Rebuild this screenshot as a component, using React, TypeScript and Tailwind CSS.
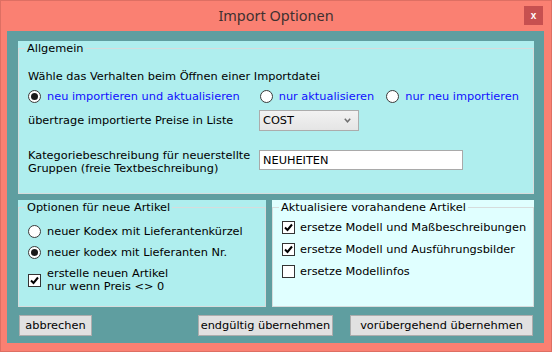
import React from "react";

function Radio({ checked }: { checked?: boolean }) {
  return (
    <span className="flex h-[13px] w-[13px] shrink-0 items-center justify-center rounded-full border border-[#3a3a3a] bg-white">
      {checked && <span className="h-[7px] w-[7px] rounded-full bg-[#1a1a1a]" />}
    </span>
  );
}

function Check({ checked }: { checked?: boolean }) {
  return (
    <span className="flex h-[13px] w-[13px] shrink-0 items-center justify-center border border-[#333333] bg-white">
      {checked && (
        <svg width="9" height="9" viewBox="0 0 9 9">
          <path d="M1 4.5 L3.5 7 L8 1.5" fill="none" stroke="#000" strokeWidth="2" />
        </svg>
      )}
    </span>
  );
}

function Group({ title, className, children }: { title: string; className: string; children: React.ReactNode }) {
  return (
    <div className={className}>
      <fieldset className="h-full border border-[#d6dcdc] px-0 pb-0 pt-0">
        <legend className="ml-[6px] px-[2px] leading-[14px]">{title}</legend>
        {children}
      </fieldset>
    </div>
  );
}

function Button({ label, className }: { label: string; className: string }) {
  return (
    <button className={"h-[21px] border border-[#adadad] bg-[#e1e1e1] leading-[19px] text-black " + className}>
      {label}
    </button>
  );
}

export default function App() {
  return (
    <div className="flex h-[352px] w-[552px] flex-col border border-[#de6f63] bg-[#fa8072] font-['DejaVu_Sans',sans-serif] text-[11.33px] text-black">
      <div className="grid h-[30px] grid-cols-[1fr_auto_1fr] items-center">
        <div />
        <div className="font-['Noto_Sans',sans-serif] text-[14.5px] text-[#3e3130]">Import Optionen</div>
        <div className="flex justify-end pr-[8px]">
          <div className="mt-[-1px] flex h-[19px] w-[19px] items-center justify-center bg-[#c75050] font-['Liberation_Sans',sans-serif] text-[10px] font-bold leading-none text-white">
            x
          </div>
        </div>
      </div>
      <div className="ml-[6px] mr-[7px] flex h-[312px] flex-col bg-[#5f9ea0] pl-[11px] pr-[10px] pt-[10px]">
        <Group title="Allgemein" className="h-[153px] bg-[#afeeee]">
          <div className="pl-[9px]">
            <div className="mt-[14px] leading-[14px]">Wähle das Verhalten beim Öffnen einer Importdatei</div>
            <div className="mt-[6px] flex h-[14px] items-center text-[#1010ff]">
              <Radio checked />
              <span className="ml-[6px]">neu importieren und aktualisieren</span>
              <span className="ml-[20px]">
                <Radio />
              </span>
              <span className="ml-[6px]">nur aktualisieren</span>
              <span className="ml-[12px]">
                <Radio />
              </span>
              <span className="ml-[6px]">nur neu importieren</span>
            </div>
            <div className="mt-[7px] flex h-[21px] items-center">
              <span className="w-[231px]">übertrage importierte Preise in Liste</span>
              <div className="flex h-[21px] w-[100px] items-center justify-between border border-[#acacac] bg-gradient-to-b from-[#f2f2f2] to-[#e5e5e5] pl-[3px] pr-[7px]">
                <span>COST</span>
                <svg width="7" height="5" viewBox="0 0 7 5">
                  <path d="M0.8 0.8 L3.5 3.8 L6.2 0.8" fill="none" stroke="#707070" strokeWidth="1.5" />
                </svg>
              </div>
            </div>
            <div className="mt-[18px] flex items-start">
              <div className="w-[231px] leading-[13px]">
                Kategoriebeschreibung für neuerstellte
                <br />
                Gruppen (freie Textbeschreibung)
              </div>
              <div className="mt-[1px] flex h-[20px] w-[204px] items-center border border-[#a9a9a9] bg-white pl-[3px]">
                NEUHEITEN
              </div>
            </div>
          </div>
        </Group>
        <div className="mt-[6px] flex h-[107px] gap-[6px]">
          <Group title="Optionen für neue Artikel" className="w-[248px] bg-[#afeeee]">
            <div className="pl-[9px]">
              <div className="mt-[10px] flex h-[14px] items-center">
                <Radio />
                <span className="ml-[6px]">neuer Kodex mit Lieferantenkürzel</span>
              </div>
              <div className="mt-[7px] flex h-[14px] items-center">
                <Radio checked />
                <span className="ml-[6px]">neuer kodex mit Lieferanten Nr.</span>
              </div>
              <div className="mt-[8px] flex items-center">
                <Check checked />
                <span className="ml-[6px] leading-[13px]">
                  erstelle neuen Artikel
                  <br />
                  nur wenn Preis &lt;&gt; 0
                </span>
              </div>
            </div>
          </Group>
          <Group title="Aktualisiere vorahandene Artikel" className="flex-1 bg-[#e0ffff]">
            <div className="pl-[9px]">
              <div className="mt-[6px] flex h-[14px] items-center">
                <Check checked />
                <span className="ml-[5px]">ersetze Modell und Maßbeschreibungen</span>
              </div>
              <div className="mt-[8px] flex h-[14px] items-center">
                <Check checked />
                <span className="ml-[5px]">ersetze Modell und Ausführungsbilder</span>
              </div>
              <div className="mt-[8px] flex h-[14px] items-center">
                <Check />
                <span className="ml-[5px]">ersetze Modellinfos</span>
              </div>
            </div>
          </Group>
        </div>
        <div className="mt-[8px] flex">
          <Button label="abbrechen" className="ml-[1px] w-[73px]" />
          <div className="flex-1" />
          <Button label="endgültig übernehmen" className="w-[135px]" />
          <Button label="vorübergehend übernehmen" className="ml-[17px] mr-[1px] w-[183px]" />
        </div>
      </div>
    </div>
  );
}
